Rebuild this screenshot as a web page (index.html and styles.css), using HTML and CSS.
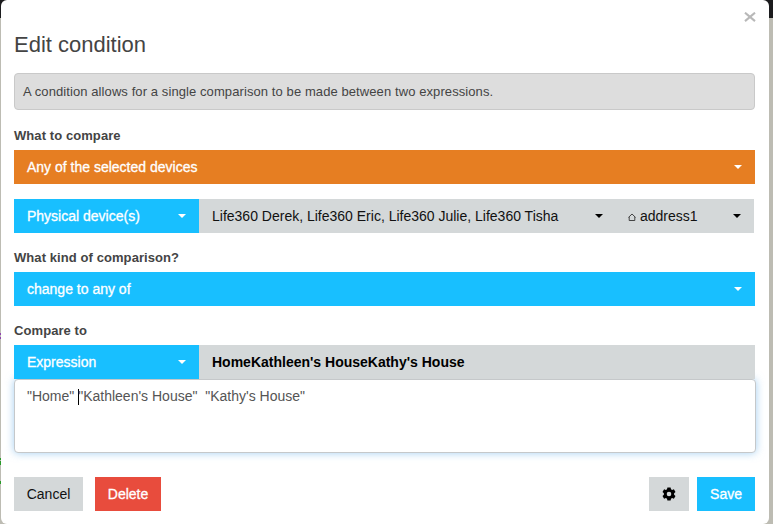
FILE: index.html
```html
<!DOCTYPE html>
<html lang="en">
<head>
  <meta charset="UTF-8" />
  <meta name="viewport" content="width=device-width, initial-scale=1.0" />
  <title>Edit condition</title>
  <link rel="stylesheet" href="styles.css">
</head>
<body>
  <div class="modal">
    <button class="close" aria-label="Close">
      <svg width="12" height="10" viewBox="0 0 12 10"><path d="M1 0.7 L11 9.1 M11 0.7 L1 9.1" stroke="#b8b8b8" stroke-width="2.1" fill="none" /></svg>
    </button>
    <h1 class="title">Edit condition</h1>
    <div class="alert">A condition allows for a single comparison to be made between two expressions.</div>

    <div class="label">What to compare</div>
    <button class="select orange"><span>Any of the selected devices</span><i class="caret"></i></button>

    <div class="group devices">
      <button class="select blue type"><span>Physical device(s)</span><i class="caret"></i></button>
      <button class="select gray list"><span>Life360 Derek, Life360 Eric, Life360 Julie, Life360 Tisha</span><i class="caret"></i></button>
      <button class="select gray attribute"><span class="attr"><svg class="home" width="8" height="9" viewBox="0 0 8 9"><path d="M0.5 4.4 L4 1 L7.5 4.4 M1.2 3.9 V7.5 H6.8 V3.9" stroke="#333" stroke-width="0.9" fill="none" /></svg>address1</span><i class="caret"></i></button>
    </div>

    <div class="label">What kind of comparison?</div>
    <button class="select blue"><span>change to any of</span><i class="caret"></i></button>

    <div class="label">Compare to</div>
    <div class="group">
      <button class="select blue type"><span>Expression</span><i class="caret"></i></button>
      <div class="result">HomeKathleen's HouseKathy's House</div>
    </div>
    <div class="editor">"Home" <i class="cursor"></i>"Kathleen's House"&nbsp; "Kathy's House"</div>

    <div class="footer">
      <button class="btn gray cancel">Cancel</button>
      <button class="btn red delete">Delete</button>
      <button class="btn gray gear" aria-label="Settings">
        <svg width="14" height="14" viewBox="0 0 14 14"><path fill="#000" fill-rule="evenodd" d="M5.4 0.4 H8.6 L9 2.3 L10.1 2.9 L11.9 2.2 L13.5 5 L12.1 6.3 V7.7 L13.5 9 L11.9 11.8 L10.1 11.1 L9 11.7 L8.6 13.6 H5.4 L5 11.7 L3.9 11.1 L2.1 11.8 L0.5 9 L1.9 7.7 V6.3 L0.5 5 L2.1 2.2 L3.9 2.9 L5 2.3 Z M7 4.7 A2.3 2.3 0 1 0 7 9.3 A2.3 2.3 0 1 0 7 4.7 Z" /></svg>
      </button>
      <button class="btn blue">Save</button>
    </div>
  </div>
</body>
</html>
```
FILE: styles.css
```css
* {
  box-sizing: border-box;
}
body {
  margin: 0;
  padding: 0 4px 0 1px;
  height: 524px;
  overflow: hidden;
  font-family: "Liberation Sans", Arial, sans-serif;
  font-size: 14px;
  color: #444;
  background:
    linear-gradient(#8e44ad, #8e44ad) 0 333px / 1px 2px no-repeat,
    linear-gradient(#8e44ad, #8e44ad) 0 337px / 1px 2px no-repeat,
    linear-gradient(#279a27, #279a27) 0 458px / 1px 2px no-repeat,
    linear-gradient(#279a27, #279a27) 0 461px / 1px 4px no-repeat,
    linear-gradient(#279a27, #279a27) 0 481px / 1px 3px no-repeat,
    linear-gradient(#1b1b1d 18px, #bdbcb3 18px);
}
button {
  font: inherit;
  border: none;
  margin: 0;
  cursor: pointer;
}
.modal {
  position: relative;
  height: 524px;
  padding: 31px 14px 13px 13px;
  background: #fff;
  border-radius: 6px;
}
.close {
  position: absolute;
  top: 12px;
  right: 13px;
  padding: 0;
  background: none;
  line-height: 0;
}
.title {
  margin: 0 0 15px;
  font-size: 22px;
  font-weight: normal;
  line-height: 27px;
}
.alert {
  height: 37px;
  padding: 0 8px;
  border: 1px solid #c9c9c9;
  border-radius: 4px;
  background: #ddd;
  font-size: 13px;
  letter-spacing: 0.09px;
  line-height: 35px;
}
.label {
  height: 40px;
  padding-top: 17px;
  font-size: 13px;
  font-weight: bold;
  letter-spacing: 0.08px;
  line-height: 18px;
}
.select {
  display: flex;
  align-items: center;
  justify-content: space-between;
  width: 100%;
  height: 34px;
  padding: 0 13px;
  text-align: left;
  white-space: nowrap;
}
.orange {
  background: #e67e22;
  color: #fff;
}
.blue {
  background: #18bfff;
  color: #fff;
}
.gray {
  background: #d4d8d9;
  color: #111;
}
.red {
  background: #e84c3d;
  color: #fff;
}
.orange, .blue, .red {
  -webkit-text-stroke: 0.3px #fff;
}
.caret {
  border-top: 4px solid;
  border-left: 4px solid transparent;
  border-right: 4px solid transparent;
}
.gray .caret {
  border-top-color: #000;
}
.group {
  display: flex;
}
.devices {
  margin-top: 15px;
  padding-right: 1px;
}
.devices + .label, .select + .label {
  height: 39px;
  padding-top: 16px;
}
.type {
  width: 185px;
  flex: none;
}
.list {
  width: 417px;
  flex: none;
}
.attribute {
  flex: 1;
  padding-left: 12px;
}
.attr {
  display: flex;
  align-items: center;
  gap: 4px;
}
.home {
  margin-top: 2px;
}
.result {
  flex: 1;
  padding: 0 13px;
  background: #d4d8d9;
  color: #000;
  font-weight: bold;
  line-height: 34px;
}
.editor {
  height: 74px;
  margin-right: -1px;
  padding: 7px 12px;
  border: 1px solid #c5c8ca;
  border-radius: 4px;
  background: #fff;
  box-shadow: 0 0 8px rgba(102, 175, 233, 0.6);
  color: #555;
  line-height: 18px;
  white-space: pre;
}
.cursor {
  display: inline-block;
  width: 1px;
  height: 16px;
  margin-right: -1px;
  background: #000;
  vertical-align: -4px;
}
.footer {
  display: flex;
  margin-top: 24px;
}
.btn {
  height: 34px;
  padding: 0 13px;
}
.cancel {
  width: 69px;
  padding: 0 12px;
}
.delete {
  width: 66px;
  padding: 0 12px;
  margin-left: 12px;
}
.gear {
  width: 40px;
  margin-left: auto;
  margin-right: 8px;
  line-height: 0;
}
```
